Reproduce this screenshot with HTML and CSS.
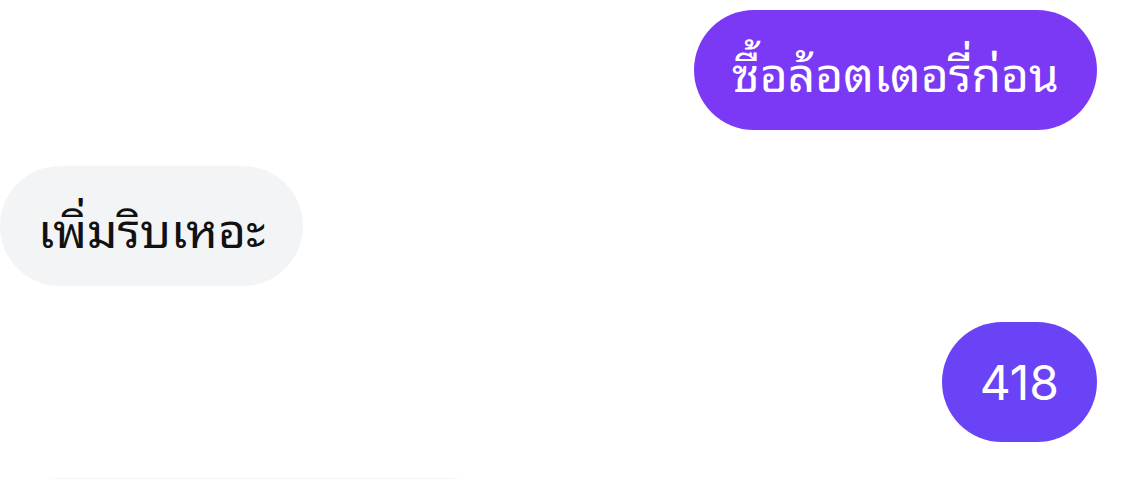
FILE: index.html
```html
<!DOCTYPE html>
<html lang="th">
<head>
    <meta charset="UTF-8">
    <meta name="viewport" content="width=device-width, initial-scale=1.0">
    <title>แชท</title>
    <link rel="stylesheet" href="styles.css">
</head>
<body>
    <div class="chat">
        <div class="msg msg-out">
            <div class="bubble bubble-out">ซื้อล้อตเตอรี่ก่อน</div>
        </div>
        <div class="msg msg-in">
            <div class="bubble bubble-in">เพิ่มริบเหอะ</div>
        </div>
        <div class="msg msg-out">
            <div class="bubble bubble-out bubble-late">418</div>
        </div>
        <div class="msg msg-in">
            <div class="bubble bubble-in bubble-wide"></div>
        </div>
    </div>
</body>
</html>
```

FILE: styles.css
```css
body {
    font-family: Inter, "Noto Sans Thai Looped", "Noto Sans Thai", "Noto Sans", sans-serif;
    background-color: #fff;
    margin: 0;
    height: 479px;
    overflow: hidden;
}

.chat {
    display: flex;
    flex-direction: column;
    gap: 36px;
    padding: 10px 24px 0 0;
}

.msg {
    display: flex;
}

.msg-out {
    justify-content: flex-end;
}

.msg-in {
    justify-content: flex-start;
}

.bubble {
    height: 120px;
    box-sizing: border-box;
    padding: 0 38px;
    border-radius: 60px;
    display: flex;
    align-items: center;
    font-size: 48px;
    white-space: nowrap;
}

.bubble-out {
    background-color: #7b39f5;
    color: #fff;
}

.bubble-late {
    background-color: #6b43f6;
}

.bubble-in {
    background-color: #f3f4f6;
    color: #111;
}

.bubble-wide {
    width: 510px;
}
```
